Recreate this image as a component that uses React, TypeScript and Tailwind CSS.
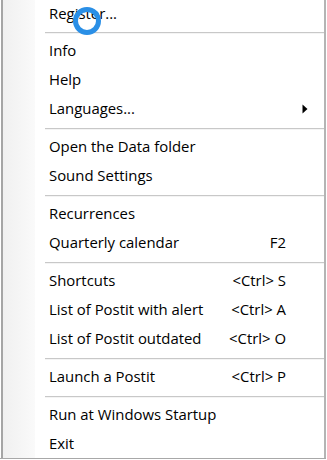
import React from "react";

type Entry =
  | { kind: "item"; label: string; shortcut?: string; submenu?: boolean; h?: string }
  | { kind: "sep" };

const entries: Entry[] = [
  { kind: "item", label: "Register...", h: "h-[28px]" },
  { kind: "sep" },
  { kind: "item", label: "Info" },
  { kind: "item", label: "Help" },
  { kind: "item", label: "Languages...", submenu: true },
  { kind: "sep" },
  { kind: "item", label: "Open the Data folder" },
  { kind: "item", label: "Sound Settings" },
  { kind: "sep" },
  { kind: "item", label: "Recurrences" },
  { kind: "item", label: "Quarterly calendar", shortcut: "F2" },
  { kind: "sep" },
  { kind: "item", label: "Shortcuts", shortcut: "<Ctrl> S" },
  { kind: "item", label: "List of Postit with alert", shortcut: "<Ctrl> A" },
  { kind: "item", label: "List of Postit outdated", shortcut: "<Ctrl> O" },
  { kind: "sep" },
  { kind: "item", label: "Launch a Postit", shortcut: "<Ctrl> P" },
  { kind: "sep" },
  { kind: "item", label: "Run at Windows Startup" },
  { kind: "item", label: "Exit" },
];

function SubmenuArrow() {
  return (
    <svg width="6" height="10" viewBox="0 0 6 10" className="block">
      <path d="M0.5 0.5 L5.5 5 L0.5 9.5 Z" fill="#000" />
    </svg>
  );
}

export default function App() {
  return (
    <div
      className="relative h-[460px] w-[327px] overflow-hidden bg-white text-[14.9px] text-black"
      style={{ fontFamily: '"Open Sans", "Noto Sans", sans-serif' }}
    >
      <div className="flex h-[459px] w-[326px] border-b border-[#a8a8a8]">
        {/* left frame + icon gutter */}
        <div className="w-[3px] shrink-0 border-l border-white bg-[#a5a5a5]" />
        <div className="w-[32px] shrink-0 bg-gradient-to-r from-[#f0f0f0] to-[#fafafa]" />
        <div className="flex flex-1 flex-col border-r-[2px] border-[#b4b4b4]">
          {entries.map((e, i) =>
            e.kind === "sep" ? (
              <div key={i} className="flex h-[9px] shrink-0 items-center pl-[10px]">
                <div className="h-[2px] w-full border-t border-[#c8c8c8] bg-[#f4f4f4]" />
              </div>
            ) : (
              <div
                key={i}
                className={`flex ${e.h ?? "h-[29px]"} shrink-0 items-center pb-[2px] pl-[14px]`}
              >
                <span className="flex-1 whitespace-nowrap">{e.label}</span>
                {e.shortcut && (
                  <span className="w-[80px] whitespace-nowrap text-right">
                    {e.shortcut}
                  </span>
                )}
                <span className="flex w-[38px] justify-center">
                  {e.submenu && <SubmenuArrow />}
                </span>
              </div>
            )
          )}
        </div>
      </div>

      {/* cursor highlight ring */}
      <svg
        width="32"
        height="32"
        viewBox="0 0 32 32"
        className="absolute left-[71px] top-[5px]"
      >
        <circle cx="16" cy="16" r="11.5" fill="none" stroke="#2a8fe6" strokeWidth="5" />
      </svg>
    </div>
  );
}
